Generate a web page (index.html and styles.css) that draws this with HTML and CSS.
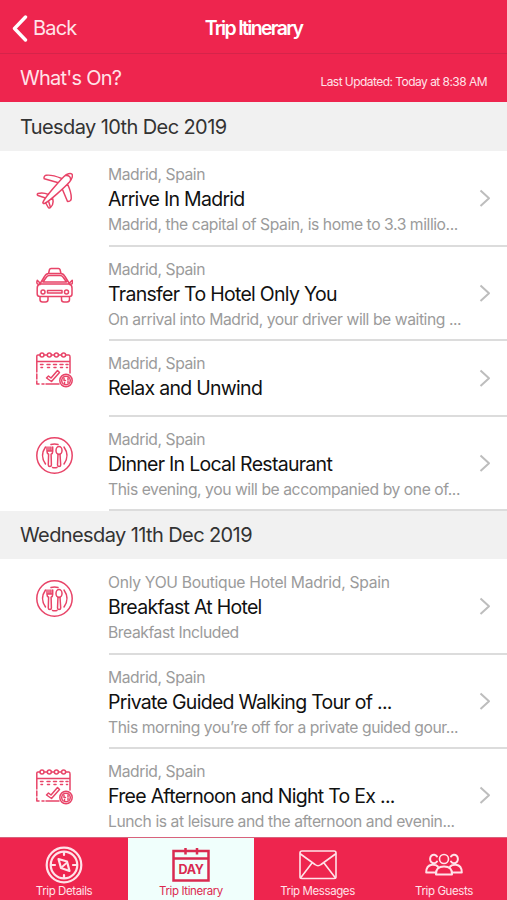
FILE: index.html
```html
<!DOCTYPE html>
<html lang="en">
<head>
<meta charset="utf-8">
<title>Trip Itinerary</title>
<link rel="stylesheet" href="styles.css">
</head>
<body>
<svg class="symbols" aria-hidden="true">
  <symbol id="plane" viewBox="0 0 37 37">
    <path d="M7 30.500C7.500 27 23 9.500 28 4.500C31 1.500 34.500 .800 35.800 2C37.200 3.300 36 7 33.500 10C29 15 13 29.500 8.800 31.300C7.500 31.800 6.800 31.500 7 30.500ZM29.500 3.500C33 3 35 5 34.500 8.500M21.500 10.500L8.300 6.800C7.600 5.500 8.300 3.700 10 3.300C14 2.600 19.500 4 25.800 6.500M26.500 17.500L31.500 29.500C33.500 29.500 35 28.500 35.200 27C35.500 23 34.300 18 31.700 12.500M9.500 26L2 23.500C1 23 1 22 2 21.500C5 20.700 9 21 12.500 22.500M12.500 29L14.500 35.500C13.500 36.500 12.500 36 12 35L10 31.500M12.500 29L16.500 26C17.500 29.500 17 33.500 14.500 35.500"/>
  </symbol>
  <symbol id="taxi" viewBox="0 0 37 37">
    <path d="M12.500 6.500L13.500 2.500Q13.800 1.500 15 1.500H22.500Q23.700 1.500 24 2.500L25 6.500M4.500 16L8.500 9.500Q10 6.500 13 6.500H24.500Q27.500 6.500 29 9.500L33 16M7 15L10.500 10Q11.500 8.500 13.500 8.500H24Q26 8.500 27 10L30.500 15ZM4 16L1.300 13.300Q.300 15.500 1.500 17L4 17.500M33.500 16L36.200 13.300Q37 15.500 35.800 17L33.500 17.500M4 17H33.500Q36 18 36 21V27Q36 29.500 33.500 29.500H4Q1.200 29.500 1.200 27V21Q1.200 18 4 17ZM4 30V32.500Q4 35 6.500 35H9.500Q12 35 12 32.500V30M25.500 30V32.500Q25.500 35 28 35H31Q33.500 35 33.500 32.500V30M11.500 23.500H26V26H11.500Z"/>
    <circle cx="7" cy="25" r="2"/><circle cx="30.500" cy="25" r="2"/>
  </symbol>
  <symbol id="calendar" viewBox="0 0 37 37">
    <path d="M.800 20V4Q.800 3 2 3H4M8.500 3H11.500M15.500 3H18M22.500 3H25M30 3H33Q34 3 34 5V21M1 9.500H34M.800 22V27M.800 29V32H3M6 32H8M10 32H23M4.500 12.500H7M11 12.500H14M17.500 12.500H20.500M24 12.500H27M30 12.500H32M5 15.500H6.500M11.500 15.500H13.500M18 15.500H20M24.500 15.500H26.500M30.500 15.500H31.500M10.500 26L12.500 24L15 26L21.500 18.500L23.500 20.500L15.500 29.500Z"/>
    <circle cx="6" cy="3" r="2"/><circle cx="13.300" cy="3" r="2"/><circle cx="20.400" cy="3" r="2"/><circle cx="27.600" cy="3" r="2"/>
    <circle cx="30" cy="28.500" r="6.200"/><circle cx="30" cy="28.500" r="4.300"/>
    <path d="M28 26.300V28.500H29.500M32 26V28M28.500 31.500V30.500M32 31V29.500"/>
  </symbol>
  <symbol id="meal" viewBox="0 0 37 37">
    <circle cx="18.500" cy="18.500" r="17.700"/>
    <path d="M15 7.500Q18.500 6.300 22 7.500M16.500 30.500Q18.500 31 21 30.500M9.500 10Q3.500 18.500 9.500 27M28 10Q34 18.500 28 27"/>
    <path d="M11 10V14.500Q11 16.500 12.600 17.200L12.300 28Q12.300 29.500 13.900 29.500Q15.400 29.500 15.400 28L15.100 17.200Q16.700 16.500 16.700 14.500V10M13 10V14M14.900 10V14M11 14H16.700"/>
    <ellipse cx="23" cy="13.500" rx="3" ry="3.900"/><path d="M22 17L21.500 28Q21.500 29.500 23 29.500Q24.700 29.500 24.700 28L24 17"/>
  </symbol>
  <symbol id="chevron" viewBox="0 0 12 18"><path d="M1.500 1.500L10 9.300L1.500 17"/></symbol>
</svg>
<div class="app">
  <header class="nav">
    <div class="back"><svg viewBox="0 0 16 28"><path d="M13.500 3L2.500 14.500L13.500 26"/></svg><span>Back</span></div>
    <h1>Trip Itinerary</h1>
  </header>
  <div class="status"><span class="whats">What's On?</span><span class="updated">Last Updated: Today at 8:38 AM</span></div>
  <main>
    <h2>Tuesday 10th Dec 2019</h2>
    <article class="row first"><svg class="icon"><use href="#plane"/></svg><div class="content"><div class="text"><p class="place">Madrid, Spain</p><h3>Arrive In Madrid</h3><p class="desc">Madrid, the capital of Spain, is home to 3.3 millio...</p></div><svg class="chevron"><use href="#chevron"/></svg></div></article>
    <article class="row"><svg class="icon"><use href="#taxi"/></svg><div class="content"><div class="text"><p class="place">Madrid, Spain</p><h3>Transfer To Hotel Only You</h3><p class="desc">On arrival into Madrid, your driver will be waiting ...</p></div><svg class="chevron"><use href="#chevron"/></svg></div></article>
    <article class="row short"><svg class="icon"><use href="#calendar"/></svg><div class="content"><div class="text"><p class="place">Madrid, Spain</p><h3>Relax and Unwind</h3></div><svg class="chevron"><use href="#chevron"/></svg></div></article>
    <article class="row"><svg class="icon"><use href="#meal"/></svg><div class="content"><div class="text"><p class="place">Madrid, Spain</p><h3>Dinner In Local Restaurant</h3><p class="desc">This evening, you will be accompanied by one of...</p></div><svg class="chevron"><use href="#chevron"/></svg></div></article>
    <h2>Wednesday 11th Dec 2019</h2>
    <article class="row first"><svg class="icon"><use href="#meal"/></svg><div class="content"><div class="text"><p class="place venue">Only YOU Boutique Hotel Madrid, Spain</p><h3>Breakfast At Hotel</h3><p class="desc">Breakfast Included</p></div><svg class="chevron"><use href="#chevron"/></svg></div></article>
    <article class="row"><div class="icon"></div><div class="content"><div class="text"><p class="place">Madrid, Spain</p><h3>Private Guided Walking Tour of ...</h3><p class="desc">This morning you’re off for a private guided gour...</p></div><svg class="chevron"><use href="#chevron"/></svg></div></article>
    <article class="row"><svg class="icon"><use href="#calendar"/></svg><div class="content"><div class="text"><p class="place">Madrid, Spain</p><h3>Free Afternoon and Night To Ex ...</h3><p class="desc">Lunch is at leisure and the afternoon and evenin...</p></div><svg class="chevron"><use href="#chevron"/></svg></div></article>
  </main>
  <footer class="tabs">
    <div class="tab"><svg viewBox="0 0 38 38"><circle cx="19" cy="19" r="17.300" stroke-width="2.200"/><circle cx="19" cy="19" r="13.300" stroke-width="2.200"/><path d="M19 6V9M19 29V32M6 19H10M28 19H32M13.500 13L22 15.500L24.500 25L16 22Z" stroke-width="2.200"/><path d="M17 21L21.500 17" stroke-width="1.800"/></svg><span>Trip Details</span></div>
    <div class="tab active"><svg viewBox="0 0 38 38"><path d="M1.500 5H36.500V34.500H1.500ZM1.500 12.500H36.500M13.500 2V8.500M25 2V8.500" stroke-width="2.500"/><text x="19" y="28">DAY</text></svg><span>Trip Itinerary</span></div>
    <div class="tab"><svg viewBox="0 0 38 38"><rect x="1" y="5" width="36" height="27.500" rx="2"/><path d="M1.500 8L16 18.500Q19 21 22 18.500L36.500 8M1.500 32L13 17M36.500 32L25 17"/></svg><span>Trip Messages</span></div>
    <div class="tab"><svg viewBox="0 0 38 38"><circle cx="19" cy="13" r="4.500"/><path d="M12 15.500A3.800 4.300 0 1 1 12 10.500M26 15.500A3.800 4.300 0 1 0 26 10.500M11 28.500Q10.500 20.500 19 20.500Q27.500 20.500 27 28.500ZM9.500 26.500H1.200Q1.200 19.500 7 18.800Q11 18.500 12.800 20.500M28.500 26.500H36.800Q36.800 19.500 31 18.800Q27 18.500 25.200 20.500" stroke-width="2"/></svg><span>Trip Guests</span></div>
  </footer>
</div>
</body>
</html>
```
FILE: styles.css
```css
* { box-sizing: border-box; }
body, h1, h2, h3, p { margin: 0; font-weight: 400; }
body { font-family: Inter, "Liberation Sans", sans-serif; background: #fff; }
svg { display: block; flex: none; fill: none; stroke-linecap: round; stroke-linejoin: round; }
.symbols { width: 0; height: 0; position: absolute; }
.app { height: 900px; display: flex; flex-direction: column; overflow: hidden; }
.nav { height: 54px; background: #ee254e; color: #fff; border-bottom: 1px solid #d5244a; display: grid; grid-template-columns: 1fr auto 1fr; align-items: center; padding: 3px 0 0 12px; flex: none; }
.nav h1 { font-size: 19.5px; font-weight: 600; letter-spacing: -1.7px; margin-left: -12px; }
.back { display: flex; align-items: center; gap: 5px; font-size: 20px; letter-spacing: -.8px; color: #ffe3e9; }
.back svg { width: 16px; height: 28px; stroke: #fff; stroke-width: 3.4; }
.status { height: 48px; flex: none; background: #ee254e; display: flex; align-items: center; justify-content: space-between; padding: 0 20px; color: #ffe3e9; }
.whats { font-size: 20px; letter-spacing: -.75px; }
.updated { font-size: 12px; letter-spacing: -.54px; padding-top: 6px; }
main { flex: 1; min-height: 0; overflow: hidden; }
h2 { height: 49px; background: #f1f1f1; color: #333; font-size: 20px; line-height: 50px; letter-spacing: -.6px; padding-left: 20px; }
.row + h2 { height: 48px; line-height: 49px; }
.row { height: 94px; display: flex; padding-left: 36px; }
.row.first { height: 96px; }
.row.short { height: 76px; }
.icon { width: 37px; height: 37px; margin: 20px 36px 0 0; stroke: #e84468; stroke-width: 1.5; }
.first .icon { margin-top: 21px; }
.short .icon { margin-top: 11px; }
.content { flex: 1; min-width: 0; display: flex; align-items: center; border-bottom: 2px solid #dcdcdc; padding-right: 16px; }
.text { flex: 1; align-self: flex-start; padding-top: 10px; line-height: 25px; white-space: nowrap; margin-left: -1px; }
.first .text { padding-top: 11px; }
.place, .desc { color: #9b9b9b; font-size: 15.7px; letter-spacing: -.44px; }
.place.venue { letter-spacing: -.31px; }
h3 { color: #111; font-size: 19.5px; letter-spacing: -.71px; }
.chevron { width: 12px; height: 18px; stroke: #bdbdbd; stroke-width: 2; stroke-linecap: butt; }
.tabs { height: 63px; flex: none; border-top: 1px solid #d8627c; display: grid; grid-template-columns: 128px 126px 127px 126px; background: #ee254e; color: #ffe3e9; }
.tab { display: flex; flex-direction: column; align-items: center; padding-top: 8px; font-size: 11.5px; line-height: 14px; letter-spacing: -.4px; }
.tab svg { width: 38px; height: 38px; stroke: #ffe3e9; stroke-width: 1.6; }
.tab.active { background: #f0fffc; color: #dc294f; }
.active svg { stroke: #d92b50; stroke-linecap: butt; stroke-linejoin: miter; }
.active text { fill: #d92b50; stroke: none; font-size: 12.5px; font-weight: 700; text-anchor: middle; letter-spacing: -.3px; }
```
